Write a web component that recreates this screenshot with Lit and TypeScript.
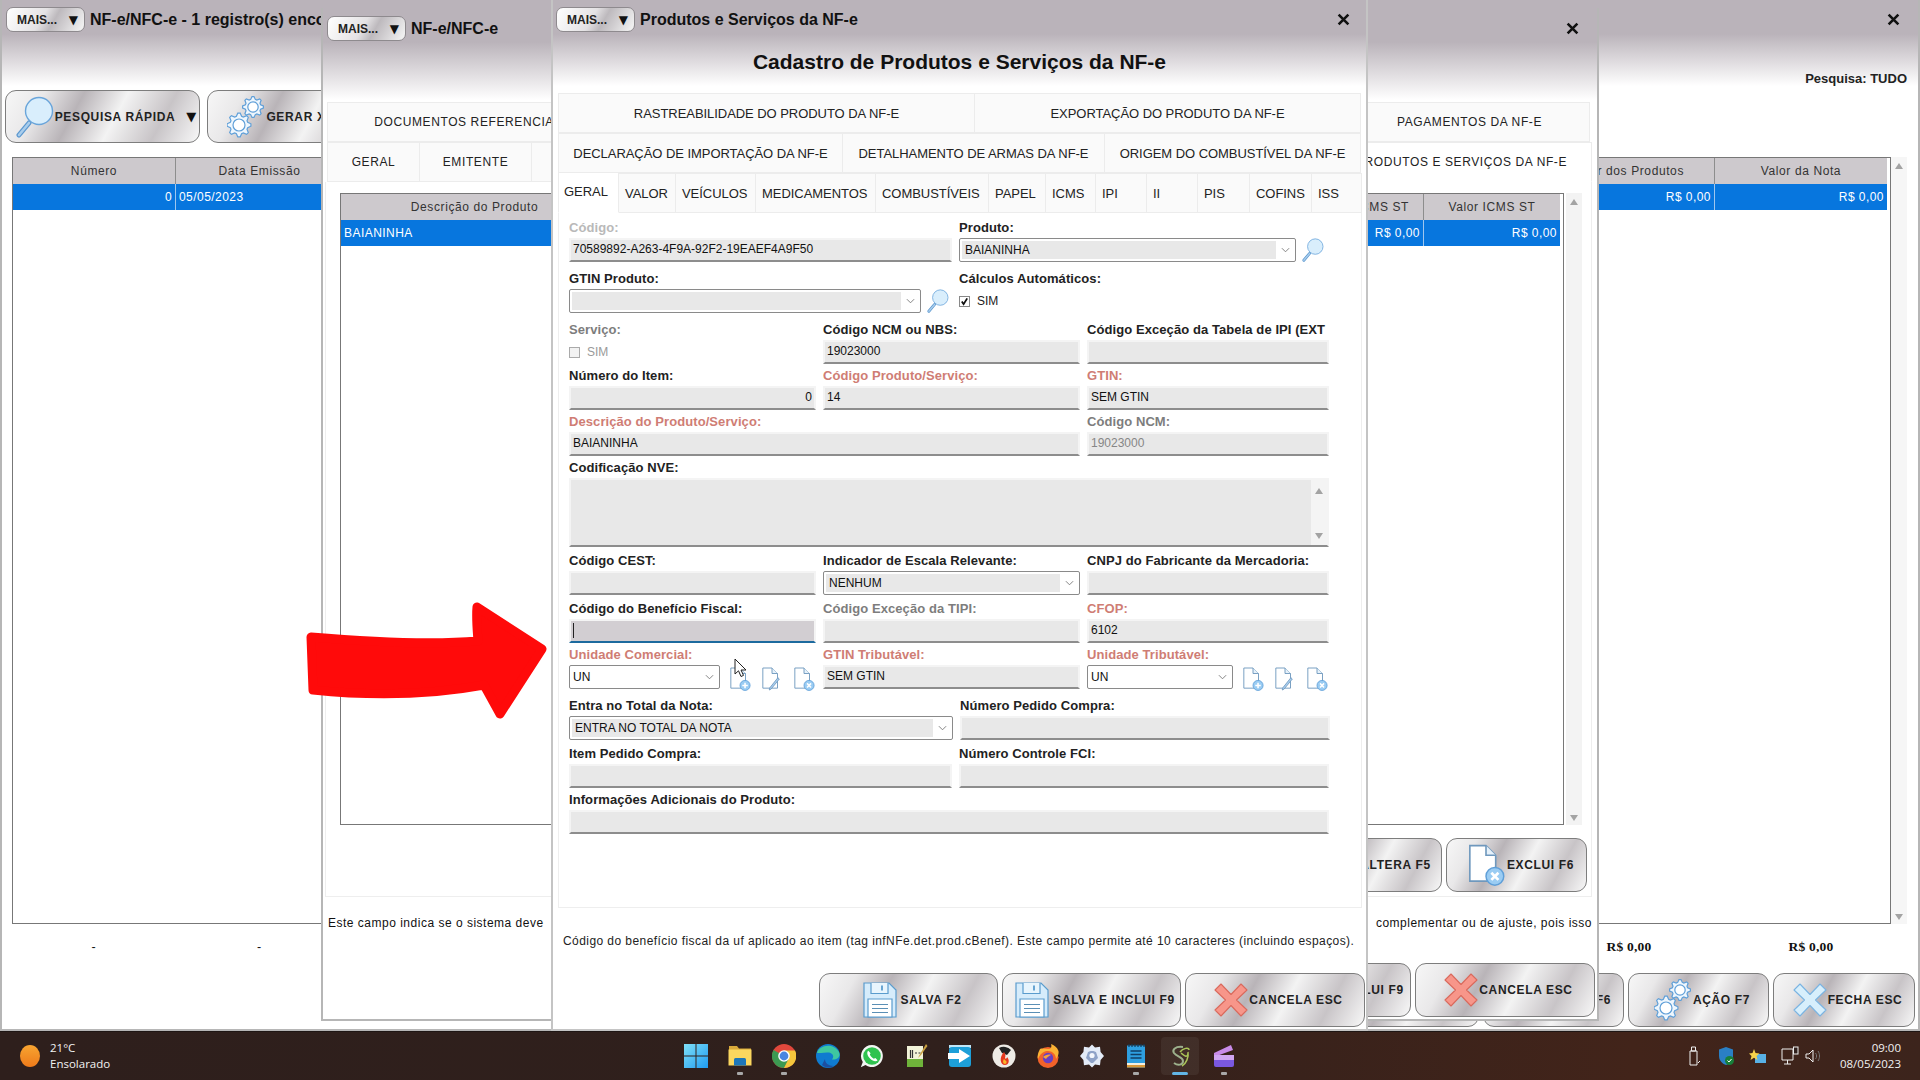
import { LitElement, html, css, svg } from "lit";
import { customElement } from "lit/decorators.js";

const gearPath = (cx: number, cy: number, r: number, teeth = 8) => {
  const pts: string[] = [];
  const steps = teeth * 4;
  for (let i = 0; i < steps; i++) {
    const a = (i / steps) * Math.PI * 2 - Math.PI / teeth / 4;
    const out = i % 4 < 2;
    const rr = out ? r : r * 0.76;
    pts.push(`${(cx + rr * Math.cos(a)).toFixed(1)} ${(cy + rr * Math.sin(a)).toFixed(1)}`);
  }
  return `M${pts.join("L")}Z`;
};

const gears = () => html`<svg class="ic-gears" viewBox="0 0 38 44">
  <path d=${gearPath(26, 12, 10.5)} fill="#eef6fd" stroke="#5f9fd8" stroke-width="1.2"/>
  <circle cx="26" cy="12" r="5.2" fill="#fff" stroke="#5f9fd8" stroke-width="1.2"/>
  <path d=${gearPath(12, 30, 12)} fill="#eef6fd" stroke="#5f9fd8" stroke-width="1.2"/>
  <circle cx="12" cy="30" r="6" fill="#fff" stroke="#5f9fd8" stroke-width="1.2"/>
</svg>`;

const lens = (cls: string) => html`<svg class=${cls} viewBox="0 0 38 42">
  <path d="M13 27 L3 39" stroke="#5b97cf" stroke-width="5" stroke-linecap="round"/>
  <path d="M13 27 L3 39" stroke="#a9cdec" stroke-width="2.6" stroke-linecap="round"/>
  <circle cx="23" cy="15" r="13.5" fill="#d9eefc" stroke="#6aa5da" stroke-width="1.4"/>
</svg>`;

const floppy = () => html`<svg class="ic-floppy" viewBox="0 0 34 36">
  <path d="M1 1H26L33 8V35H1Z" fill="#d6ecfb" stroke="#5a9ccd" stroke-width="1.2"/>
  <path d="M8 1V11.5H25V1" fill="#e8f5fd" stroke="#5a9ccd" stroke-width="1.2"/>
  <path d="M19 3.5V8.5" stroke="#5a9ccd" stroke-width="1.8"/>
  <path d="M5 17H29V35H5Z" fill="#fff" stroke="#5a9ccd" stroke-width="1.2"/>
  <path d="M9 22.5H25M9 26.5H25M9 30.5H25" stroke="#5a8fb5" stroke-width="1"/>
</svg>`;

const bigX = (fill: string, stroke: string) => html`<svg class="ic-x" viewBox="0 0 34 34">
  <path d="M7 1 L17 11.5 L27 1 L33 7 L22.5 17 L33 27 L27 33 L17 22.5 L7 33 L1 27 L11.5 17 L1 7Z" fill=${fill} stroke=${stroke} stroke-width="1.1" stroke-linejoin="round"/>
</svg>`;

const docBadge = (kind: "add" | "edit" | "del", cls = "ic-doc") => html`<svg class=${cls} viewBox="0 0 24 26">
  <path d="M2 1H12L18 7V23H2Z" fill="#fff" stroke="#6f98bd" stroke-width="1"/>
  <path d="M12 1V7H18" fill="#e6f1fa" stroke="#6f98bd" stroke-width="1"/>
  ${kind === "edit"
    ? svg`<path d="M20 13 L11 24 L9 25 L9.6 22.6 L18.4 11.6Z" fill="#a8cdee" stroke="#6f98bd" stroke-width=".9"/>`
    : svg`<circle cx="17.5" cy="20" r="5.5" fill="#9accf3" stroke="#5f9fd8" stroke-width=".9"/>
      ${kind === "add"
        ? svg`<path d="M17.5 17V23M14.5 20H20.5" stroke="#fff" stroke-width="1.7"/>`
        : svg`<path d="M15.3 17.8L19.7 22.2M19.7 17.8L15.3 22.2" stroke="#fff" stroke-width="1.7"/>`}`}
</svg>`;

const chevron = () => html`<svg class="chev" viewBox="0 0 10 6"><path d="M1 1 L5 5 L9 1" fill="none" stroke="#777" stroke-width="1"/></svg>`;

const closeX = () => html`<svg class="close" viewBox="0 0 12 12"><path d="M1.5 1.5 L10.5 10.5 M10.5 1.5 L1.5 10.5" stroke="#111" stroke-width="2.4"/></svg>`;

const mais = () => html`<div class="mais"><span>MAIS...</span><span class="tri">▼</span></div>`;

const btn = (label: string, icon: unknown, w: number) =>
  html`<div class="btn" style="width:${w}px">${icon}<span>${label}</span></div>`;

type Field = {
  l?: string; w: number; kind?: string; v?: string; tone?: string; white?: boolean;
  right?: boolean; off?: boolean; focus?: boolean;
};
type Row = { h: number; f: Field[] };

const rows: Row[] = [
  { h: 51, f: [
    { l: "Código:", w: 383, tone: "faint", v: "70589892-A263-4F9A-92F2-19EAEF4A9F50" },
    { l: "Produto:", w: 337, kind: "combo", v: "BAIANINHA" },
    { w: 24, kind: "lens" },
  ] },
  { h: 51, f: [
    { l: "GTIN Produto:", w: 352, kind: "combo", v: "" },
    { w: 24, kind: "lens" },
    { l: "Cálculos Automáticos:", w: 300, kind: "check", v: "SIM" },
  ] },
  { h: 46, f: [
    { l: "Serviço:", w: 247, kind: "check-off", v: "SIM", tone: "gray" },
    { l: "Código NCM ou NBS:", w: 257, v: "19023000" },
    { l: "Código Exceção da Tabela de IPI (EXT", w: 242, v: "" },
  ] },
  { h: 46, f: [
    { l: "Número do Item:", w: 247, v: "0", right: true },
    { l: "Código Produto/Serviço:", w: 257, v: "14", tone: "red" },
    { l: "GTIN:", w: 242, v: "SEM GTIN", tone: "red" },
  ] },
  { h: 46, f: [
    { l: "Descrição do Produto/Serviço:", w: 511, v: "BAIANINHA", tone: "red" },
    { l: "Código NCM:", w: 242, v: "19023000", tone: "gray", off: true },
  ] },
  { h: 93, f: [{ l: "Codificação NVE:", w: 760, kind: "area" }] },
  { h: 48, f: [
    { l: "Código CEST:", w: 247, v: "" },
    { l: "Indicador de Escala Relevante:", w: 257, kind: "combo", v: "NENHUM" },
    { l: "CNPJ do Fabricante da Mercadoria:", w: 242, v: "" },
  ] },
  { h: 46, f: [
    { l: "Código do Benefício Fiscal:", w: 247, v: "", focus: true },
    { l: "Código Exceção da TIPI:", w: 257, v: "", tone: "gray" },
    { l: "CFOP:", w: 242, v: "6102", tone: "red" },
  ] },
  { h: 51, f: [
    { l: "Unidade Comercial:", w: 151, kind: "combo", v: "UN", white: true, tone: "red" },
    { w: 89, kind: "docs" },
    { l: "GTIN Tributável:", w: 257, v: "SEM GTIN", tone: "red" },
    { l: "Unidade Tributável:", w: 146, kind: "combo", v: "UN", white: true, tone: "red" },
    { w: 89, kind: "docs" },
  ] },
  { h: 48, f: [
    { l: "Entra no Total da Nota:", w: 384, kind: "combo", v: "ENTRA NO TOTAL DA NOTA" },
    { l: "Número Pedido Compra:", w: 370, v: "" },
  ] },
  { h: 46, f: [
    { l: "Item Pedido Compra:", w: 383, v: "" },
    { l: "Número Controle FCI:", w: 370, v: "" },
  ] },
  { h: 45, f: [{ l: "Informações Adicionais do Produto:", w: 760, v: "" }] },
];

const control = (f: Field) => {
  switch (f.kind) {
    case "combo":
      return html`<div class="combo"><div class="combo-in ${f.white ? "white" : ""}">${f.v}</div>${chevron()}</div>`;
    case "lens":
      return html`<div class="tool">${lens("ic-lens-s")}</div>`;
    case "check":
      return html`<div class="check"><span class="box"><svg viewBox="0 0 10 10"><path d="M2 5 L4 8 L8 1.5" fill="none" stroke="#111" stroke-width="2"/></svg></span><span>${f.v}</span></div>`;
    case "check-off":
      return html`<div class="check off"><span class="box"></span><span>${f.v}</span></div>`;
    case "docs":
      return html`<div class="docs">${docBadge("add")}${docBadge("edit")}${docBadge("del")}</div>`;
    case "area":
      return html`<div class="area"><div class="area-fill"></div><div class="area-bar"><i class="up"></i><i class="down"></i></div></div>`;
    default:
      return html`<div class="input ${f.right ? "right" : ""} ${f.off ? "muted" : ""} ${f.focus ? "focus" : ""}">${f.focus ? html`<span class="caret"></span>` : f.v}</div>`;
  }
};

const taskIcons = [
  html`<svg viewBox="0 0 24 24"><defs><linearGradient id="wg" x1="0" y1="0" x2="1" y2="1"><stop offset="0" stop-color="#7fe0f8"/><stop offset="1" stop-color="#1f9bf0"/></linearGradient></defs><path d="M0 0H11.5V11.5H0ZM12.5 0H24V11.5H12.5ZM0 12.5H11.5V24H0ZM12.5 12.5H24V24H12.5Z" fill="url(#wg)"/></svg>`,
  html`<svg viewBox="0 0 24 24"><path d="M1 2H9L11 4.5H23V21H1Z" fill="#d9a93a"/><path d="M0.5 5.5H23.5V21.5H0.5Z" fill="#fbd75f"/><path d="M6 21.5V15.5Q6 14 7.5 14H16.5Q18 14 18 15.5V21.5Z" fill="#1d76b8"/></svg>`,
  html`<svg viewBox="0 0 24 24"><circle cx="12" cy="12" r="12" fill="#e0483c"/><path d="M12 12 L1.6 6 A12 12 0 0 0 12 24 L18 13.5Z" fill="#3c9a52"/><path d="M12 6.5 H23 A12 12 0 0 1 12 24 L17.5 13Z" fill="#f5c63c"/><circle cx="12" cy="12" r="5.8" fill="#fff"/><circle cx="12" cy="12" r="4.4" fill="#4a86e0"/></svg>`,
  html`<svg viewBox="0 0 24 24"><circle cx="12" cy="12" r="12" fill="#0f7bd0"/><path d="M1 9 C3 1 17 -2 23 8 C25 13 21 16 16 15.5 C19 12 16 8 11 8.5 C6 9 4 9 1 9Z" fill="#3ec7a0"/><path d="M9 15 C9 19 12 22 18 22 C14 24 9 24 6 21 C7 19 8 17 9 15Z" fill="#1d4fa0"/></svg>`,
  html`<svg viewBox="0 0 24 24"><path d="M12 1 A11 11 0 1 1 5.5 21 L0.8 23.2 L2.8 18 A11 11 0 0 1 12 1Z" fill="#f2f6f2"/><circle cx="12" cy="12" r="8.8" fill="#2fc34f"/><path d="M8.3 6.8 C6.6 8 7 11.5 10 14.5 C13 17.5 16.2 18 17.6 16.2 L15.4 14 L13.8 14.8 C12.5 14.3 10.4 12.2 9.8 10.6 L10.6 9.2Z" fill="#fff"/></svg>`,
  html`<svg viewBox="0 0 24 24"><path d="M3 2H19V23H3Z" fill="#f2f3d8"/><path d="M3 15 H19 V23 H3Z" fill="#6fb33a"/><path d="M6.5 6V14M8.5 6V14M11 9H13M14.5 9H16.5" stroke="#333" stroke-width="1.2"/><path d="M22 0 L15 12 L14 14 L17 11 L23.5 2Z" fill="#c9a040"/></svg>`,
  html`<svg viewBox="0 0 24 24"><path d="M1 1H23V4L12 7L1 4Z" fill="#bfe6f7"/><rect x="1" y="3" width="22" height="20" rx="3" fill="#1d9fd8"/><path d="M0 9H11V5L22 12L11 19V15H0Z" fill="#fff"/></svg>`,
  html`<svg viewBox="0 0 24 24"><circle cx="12" cy="12" r="11.5" fill="#eeebe6"/><path d="M7 4 A10 10 0 0 1 19 6 L15 11 L10 9Z" fill="#222"/><path d="M12 8 C7 13 8 21 13 21 C17 21 18 16 15 13 C15 15 13 15 13 14 C14 11 13 9 12 8Z" fill="#e5391f"/><path d="M12 15 C10.5 17 11 20 13 20 C15 20 15 17 13.5 16.5Z" fill="#f8b62a"/></svg>`,
  html`<svg viewBox="0 0 24 24"><circle cx="12" cy="13.5" r="10.5" fill="#f2622a"/><path d="M4 5 C2 9 1 12 2 15 C5 8 9 7 12 7 C16 7 20 10 20 15 C22 12 23 10 22.5 7 C21 3 18 1 15 0 C16 3 15 5 12 5 C9 5 6 4 4 5Z" fill="#fbb234"/><circle cx="12" cy="14" r="5.2" fill="#6a3fc0"/><path d="M7 13 C9 11 13 10 15 11 C13 12 11 13 10 15Z" fill="#f7a33a"/></svg>`,
  html`<svg viewBox="0 0 24 24"><path d="M12 0.5 L15 3.5 L20 2.8 L20.6 8 L24 12 L20.6 16 L20 21.2 L15 20.5 L12 23.5 L9 20.5 L4 21.2 L3.4 16 L0 12 L3.4 8 L4 2.8 L9 3.5Z" fill="#e3ebf7"/><path d="M8 8 C10 6.5 14 6.5 16 8 L18 14 L13 19 H11 L6 14Z" fill="#8fa3c8"/><circle cx="12" cy="11.5" r="2.6" fill="#f4f7fc"/></svg>`,
  html`<svg viewBox="0 0 24 24"><rect x="3" y="1.5" width="18" height="22" fill="#2e9fe0"/><rect x="3" y="19" width="18" height="2" fill="#f4f0e0"/><rect x="3" y="21" width="18" height="2.5" fill="#d99a3c"/><path d="M5 0V3M8 0V3M11 0V3M14 0V3M17 0V3M20 0V3" stroke="#123a58" stroke-width="1.2"/><path d="M6.5 7H17.5M6.5 10.5H17.5M6.5 14H17.5" stroke="#103f66" stroke-width="1.5"/></svg>`,
  html`<svg viewBox="0 0 24 24"><path d="M15 3 C7 2 4 6 6 9 C9 13 15 13 15 17 C15 21 10 22 6 19" fill="none" stroke="#97ad86" stroke-width="2"/><path d="M12 8 C15 4 21 3 21 6 M20 8 C21 13 18 20 14 22 M13 9 C17 12 19 14 20 10" fill="none" stroke="#a5c24f" stroke-width="1.5"/></svg>`,
  html`<svg viewBox="0 0 24 24"><path d="M2 9 L19 1 L21 6 L2 13Z" fill="#c98be8"/><path d="M2 11 H22 V21 Q22 23 20 23 H4 Q2 23 2 21Z" fill="#7a58e0"/><path d="M2 11 H22 V16 H2Z" fill="#d1a6f2"/></svg>`,
];

@customElement("app-root")
export class AppRoot extends LitElement {
  static styles = css`
    :host { display: block; width: 1920px; height: 1080px; overflow: hidden; font-family: "Liberation Sans", Arial, sans-serif; color: #111; }
    * { box-sizing: border-box; }
    svg { display: block; flex: none; }
    .root { display: flex; flex-direction: column; width: 1920px; height: 1080px; }
    .desk { position: relative; height: 1031px; background: #fff; overflow: hidden; }

    .win { position: absolute; display: flex; flex-direction: column; border: 2px solid #b6b6b6; border-top: 0; background: #fff; }
    .w1 { left: 0; top: 0; width: 1920px; height: 1031px; background: linear-gradient(#bab3ba 0, #bab3ba 34px, #fff 86px); }
    .w2 { left: 321px; top: 8px; width: 1278px; height: 1013px; background: linear-gradient(#bab3ba 0, #bab3ba 34px, #fff 92px); }
    .w3 { left: 551px; top: 0; width: 817px; height: 1031px; background: linear-gradient(#bab3ba 0, #bab3ba 34px, #fff 86px); border-color: #c4c4c4; }

    .title { display: flex; align-items: center; gap: 5px; height: 32px; padding-top: 7px; font-size: 16px; font-weight: 700; white-space: nowrap; overflow: hidden; flex: none; }
    .w1 .title { padding-left: 4px; padding-right: 18px; }
    .w2 .title { padding-left: 4px; padding-right: 18px; height: 33px; padding-top: 8px; }
    .w3 .title { padding-left: 3px; padding-right: 16px; }
    .title .close { margin-left: auto; width: 13px; height: 13px; }
    .title > span { overflow: hidden; text-overflow: clip; }
    .w1 .title > span { max-width: 231px; }
    .mais { display: flex; align-items: center; justify-content: space-between; width: 79px; height: 25px; padding: 0 6px 0 10px; border: 1px solid #8e8a8e; border-radius: 7px; background: linear-gradient(120deg, #fff 0%, #e4e2e4 45%, #bdb9bd 60%, #f6f6f6 100%); font-size: 12px; font-weight: 700; color: #222; flex: none; }
    .tri { font-family: "DejaVu Sans", sans-serif; font-size: 12px; color: #111; }

    .btn { display: flex; align-items: center; justify-content: center; gap: 1px; height: 54px; padding-left: 7px; border: 1px solid #7d7d7d; border-radius: 11px; background: linear-gradient(118deg, #f7f7f7 0%, #e9e8e9 18%, #b9b4b8 36%, #f3f3f3 56%, #c8c4c7 78%, #f8f8f8 100%); font-size: 12px; font-weight: 700; letter-spacing: .65px; color: #222; white-space: nowrap; flex: none; }
    .btnrow { display: flex; justify-content: flex-end; gap: 4px; flex: none; }
    .ic-x { width: 34px; height: 34px; }
    .ic-floppy { width: 34px; height: 36px; margin-right: 3px; }
    .ic-gears { width: 38px; height: 44px; }
    .ic-lens { width: 38px; height: 42px; }
    .ic-lens-s { width: 22px; height: 24px; }
    .ic-doc { width: 22px; height: 24px; }
    .ic-doc-l { width: 40px; height: 42px; }
    .btn .tri.big { margin-left: 10px; font-size: 13px; letter-spacing: 0; }

    /* back window */
    .w1-search { height: 58px; padding: 38px 11px 0 0; text-align: right; font-size: 13px; font-weight: 700; letter-spacing: 0; line-height: 18px; flex: none; color: #222; }
    .w1-tools { display: flex; gap: 7px; padding-left: 3px; height: 53px; flex: none; }
    .w1-tools .btn { height: 53px; }
    .tgrid-wrap { display: flex; flex: none; }
    .w1 .tgrid-wrap { margin: 14px 0 0 10px; height: 767px; }
    .w2 .tgrid-wrap { margin: 11px 0 0 14px; height: 632px; }
    .tgrid { flex: none; border: 1px solid #777; background: #fff; font-size: 12px; letter-spacing: .45px; padding-right: 3px; }
    .w1 .tgrid { width: 1879px; }
    .w2 .tgrid { width: 1224px; }
    .thead, .trow { display: grid; }
    .w1 .thead, .w1 .trow { grid-template-columns: 163px 168px 1fr 173px 172px; }
    .w2 .thead, .w2 .trow { grid-template-columns: 268px 1fr 116px 136px; }
    .thead { height: 26px; background: #cdc9cd; color: #333; letter-spacing: .6px; }
    .thead div { display: flex; align-items: center; justify-content: center; border-right: 1px solid #8d8d8d; white-space: nowrap; overflow: hidden; }
    .thead div:last-child { border-right: 0; }
    .trow { height: 26px; background: #0776de; color: #fff; }
    .trow div { display: flex; align-items: center; padding: 0 3px; border-right: 1px solid #9fc6ee; white-space: nowrap; overflow: hidden; }
    .trow div:last-child { border-right: 0; }
    .trow .r { justify-content: flex-end; }
    .sbar { width: 16px; background: #f3f3f3; display: flex; flex-direction: column; justify-content: space-between; padding: 6px 0 4px; align-items: center; flex: none; }
    .w1 .sbar { background: #f6f6f6; }
    .w2 .sbar { margin-left: 2px; }
    .up, .down { display: block; width: 0; height: 0; border-left: 4.5px solid transparent; border-right: 4.5px solid transparent; }
    .up { border-bottom: 6px solid #a3a3a3; }
    .down { border-top: 6px solid #a3a3a3; }
    .totals { display: grid; grid-template-columns: 163px 168px 1fr 172px 192px; padding-left: 10px; margin-right: 11px; height: 46px; padding-top: 15px; text-align: center; font-size: 12.5px; line-height: 16px; flex: none; }
    .totals b { font-family: "Liberation Serif", serif; font-size: 13.5px; letter-spacing: .2px; }
    .w1 .btnrow { margin-top: auto; padding: 0 3px 2px 0; }

    /* middle window */
    .w2-head { height: 61px; flex: none; }
    .w2-tabs { margin: 0 7px 0 4px; flex: none; }
    .ttr { display: flex; height: 40px; }
    .tab { display: flex; align-items: center; justify-content: center; background: #fafafa; border: 1px solid #ececec; border-left: 0; white-space: nowrap; overflow: hidden; flex: none; }
    .ttr .tab:first-child { border-left: 1px solid #ececec; }
    .w2-tabs .tab { font-size: 12px; letter-spacing: .6px; color: #222; }
    .tab.on { background: #fff; border-bottom-color: #fff; }
    .w2-panel { margin: 0 5px 0 2px; height: 715px; border: 1px solid #eee; border-top: 0; flex: none; }
    .w2-btns { padding: 13px 4px 0 0; }
    .w2 .hint { display: flex; justify-content: space-between; height: 66px; padding: 18px 5px 0 5px; font-size: 12px; letter-spacing: .5px; line-height: 16px; white-space: nowrap; flex: none; }
    .w2 .bot { padding-right: 2px; }

    /* front window */
    .heading { height: 61px; padding-bottom: 1px; line-height: 60px; text-align: center; font-size: 21px; font-weight: 700; flex: none; }
    .w3-tabs { margin: 0 5px; flex: none; }
    .w3-tabs .tab { font-size: 13px; color: #222; letter-spacing: -.05px; }
    .tab.l { justify-content: flex-start; padding-left: 6px; }
    .tab.on.l { padding-left: 5px; padding-bottom: 2px; border-top: 0; }
    .panel { margin: 0 4px 0 5px; height: 695px; border: 1px solid #eee; border-top: 0; padding: 7px 0 0 10px; flex: none; overflow: hidden; }
    .frow { display: flex; gap: 7px; align-items: flex-start; }
    .field { display: flex; flex-direction: column; flex: none; min-width: 0; }
    .lbl { height: 15px; margin-bottom: 3px; line-height: 15px; font-size: 13px; font-weight: 700; letter-spacing: .08px; color: #222; white-space: nowrap; overflow: hidden; }
    .lbl.red { color: #cf7d74; }
    .lbl.gray { color: #7d7d7d; }
    .lbl.faint { color: #b9b9b9; }
    .input { height: 24px; padding: 0 2px; line-height: 19px; font-size: 12px; color: #111; background: #e8e8e8; border: 2px solid #f4f4f4; border-bottom-color: #8d8d8d; white-space: nowrap; overflow: hidden; }
    .input.right { text-align: right; }
    .input.muted { color: #868686; }
    .input.focus { background: #d2ced2; border-bottom-color: #1c6a9e; }
    .caret { display: block; width: 1px; height: 15px; margin-top: 2px; background: #222; }
    .combo { position: relative; display: flex; align-items: center; height: 24px; padding: 2px 0 2px 2px; background: #fff; border: 1px solid #8a8a8a; border-radius: 2px; font-size: 12px; }
    .combo-in { flex: 1; height: 18px; min-width: 0; padding: 0 3px; line-height: 18px; background: #e8e8e8; white-space: nowrap; overflow: hidden; }
    .combo-in.white { background: #fff; padding-left: 1px; }
    .chev { width: 9px; height: 6px; margin: 0 5px 0 5px; }
    .tool { height: 24px; margin-left: -1px; display: flex; align-items: center; }
    .check { display: flex; align-items: center; gap: 7px; height: 24px; font-size: 12px; color: #222; }
    .check.off { color: #9a9a9a; }
    .box { display: block; width: 11px; height: 11px; padding: 0; border: 1px solid #888; background: #fff; }
    .box svg { width: 9px; height: 9px; }
    .check.off .box { border-color: #aaa; background: #f2f2f2; }
    .docs { display: flex; justify-content: flex-start; height: 26px; padding: 2px 0 0 2px; gap: 10px; }
    .area { display: flex; height: 69px; background: #f4f4f4; border: 2px solid #f4f4f4; border-bottom-color: #8d8d8d; }
    .area-fill { flex: 1; background: #e8e8e8; }
    .area-bar { width: 16px; display: flex; flex-direction: column; justify-content: space-between; align-items: center; padding: 8px 0 6px; flex: none; }
    .hint3 { height: 65px; padding: 25px 0 0 10px; font-size: 12px; letter-spacing: .43px; line-height: 16px; white-space: nowrap; color: #222; flex: none; }
    .w3 .btnrow { padding-right: 1px; }

    /* taskbar */
    .task { position: relative; display: flex; align-items: center; height: 49px; background: linear-gradient(90deg, #2e1f1c 0%, #30201c 50%, #42241a 85%, #3c241c 100%); color: #f2f2f2; font-family: "Open Sans", "Noto Sans", sans-serif; border-top: 1px solid #1f1614; }
    .weather { display: flex; align-items: center; gap: 10px; padding-left: 20px; width: 684px; flex: none; }
    .sun { width: 20px; height: 22px; border-radius: 50%; background: linear-gradient(#f8a531, #ee7a1a); flex: none; }
    .wx { font-size: 11.5px; line-height: 16px; }
    .apps { display: flex; align-items: center; gap: 20px; flex: none; }
    .app { position: relative; width: 24px; height: 38px; display: flex; align-items: center; justify-content: center; flex: none; }
    .app svg { width: 24px; height: 24px; }
    .app.run::after { content: ""; position: absolute; left: 9px; bottom: 0; width: 6px; height: 3px; background: #a8a8a8; border-radius: 1px; }
    .app.act::before { content: ""; position: absolute; left: -7px; top: 0; width: 38px; height: 38px; background: rgba(255,255,255,.06); border-radius: 4px; }
    .app.act::after { content: ""; position: absolute; left: 4px; bottom: 0; width: 16px; height: 3px; background: #62b6e6; border-radius: 2px; }
    .tray { display: flex; align-items: center; margin-left: auto; padding-right: 19px; gap: 14px; }
    .tray svg { width: 18px; height: 20px; }
    .tray .spk { margin-left: -9px; }
    .clock { margin-left: 4px; text-align: right; font-size: 11.5px; line-height: 16px; }

    .arrow { position: absolute; left: 300px; top: 595px; width: 255px; height: 130px; pointer-events: none; }
    .cursor { position: absolute; left: 734px; top: 658px; width: 14px; height: 20px; pointer-events: none; }
  `;

  render() {
    return html`<div class="root">
      <div class="desk">
        ${this.win1()}
        ${this.win2()}
        ${this.win3()}
        <svg class="arrow" viewBox="300 595 255 130"><path d="M311 637 C370 642 430 645 478 641 C477 628 476 618 477 607 L542 649 L500 714 L484 685 C430 695 370 696 313 690 Z" fill="#ff0a0a" stroke="#ff0a0a" stroke-width="9" stroke-linejoin="round"/></svg>
        <svg class="cursor" viewBox="0 0 14 20"><path d="M1 1 V16 L4.5 12.8 L7 18.5 L9.5 17.4 L7 12 H12Z" fill="#fff" stroke="#222" stroke-width="1"/></svg>
      </div>
      ${this.taskbar()}
    </div>`;
  }

  win1() {
    return html`<section class="win w1">
      <div class="title">${mais()}<span>NF-e/NFC-e - 1 registro(s) encontrado(s)</span>${closeX()}</div>
      <div class="w1-search">Pesquisa: TUDO</div>
      <div class="w1-tools">
        <div class="btn" style="width:195px">${lens("ic-lens")}<span>PESQUISA RÁPIDA</span><span class="tri big">▼</span></div>
        ${btn("GERAR XML NF-E", gears(), 185)}
      </div>
      <div class="tgrid-wrap">
        <div class="tgrid">
          <div class="thead"><div>Número</div><div>Data Emissão</div><div></div><div>Valor dos Produtos</div><div>Valor da Nota</div></div>
          <div class="trow"><div class="r">0</div><div>05/05/2023</div><div></div><div class="r">R$ 0,00</div><div class="r">R$ 0,00</div></div>
        </div>
        <div class="sbar"><i class="up"></i><i class="down"></i></div>
      </div>
      <div class="totals"><span>-</span><span>-</span><span></span><b>R$ 0,00</b><b>R$ 0,00</b></div>
      <div class="btnrow">
        ${btn("", docBadge("edit", "ic-doc-l"), 141)}
        ${btn("EXCLUI F6", docBadge("del", "ic-doc-l"), 141)}
        ${btn("AÇÃO F7", gears(), 141)}
        ${btn("FECHA ESC", bigX("#d7effc", "#7ab4e2"), 142)}
      </div>
    </section>`;
  }

  win2() {
    return html`<section class="win w2">
      <div class="title">${mais()}<span>NF-e/NFC-e</span>${closeX()}</div>
      <div class="w2-head"></div>
      <div class="w2-tabs">
        <div class="ttr">
          <div class="tab" style="width:302px">DOCUMENTOS REFERENCIADOS</div>
          <div class="tab" style="width:721px"></div>
          <div class="tab" style="width:240px">PAGAMENTOS DA NF-E</div>
        </div>
        <div class="ttr">
          <div class="tab" style="width:93px">GERAL</div>
          <div class="tab" style="width:112px">EMITENTE</div>
          <div class="tab" style="width:800px"></div>
          <div class="tab on" style="width:260px">PRODUTOS E SERVIÇOS DA NF-E</div>
        </div>
      </div>
      <div class="w2-panel">
        <div class="tgrid-wrap">
          <div class="tgrid">
            <div class="thead"><div>Descrição do Produto</div><div></div><div>Valor ICMS ST</div><div>Valor ICMS ST</div></div>
            <div class="trow"><div>BAIANINHA</div><div></div><div class="r">R$ 0,00</div><div class="r">R$ 0,00</div></div>
          </div>
          <div class="sbar"><i class="up"></i><i class="down"></i></div>
        </div>
        <div class="btnrow w2-btns">
          ${btn("ALTERA F5", docBadge("edit", "ic-doc-l"), 141)}
          ${btn("EXCLUI F6", docBadge("del", "ic-doc-l"), 141)}
        </div>
      </div>
      <div class="hint"><span>Este campo indica se o sistema deve</span><span>complementar ou de ajuste, pois isso</span></div>
      <div class="btnrow bot">
        ${btn("SALVA E INCLUI F9", floppy(), 181)}
        ${btn("CANCELA ESC", bigX("#f7968a", "#d9695c"), 180)}
      </div>
    </section>`;
  }

  win3() {
    const t3: [string, number][] = [["VALOR", 57], ["VEÍCULOS", 80], ["MEDICAMENTOS", 120], ["COMBUSTÍVEIS", 113], ["PAPEL", 57], ["ICMS", 50], ["IPI", 51], ["II", 51], ["PIS", 52], ["COFINS", 62], ["ISS", 50]];
    return html`<section class="win w3">
      <div class="title">${mais()}<span>Produtos e Serviços da NF-e</span>${closeX()}</div>
      <div class="heading">Cadastro de Produtos e Serviços da NF-e</div>
      <div class="w3-tabs">
        <div class="ttr">
          <div class="tab" style="width:417px">RASTREABILIDADE DO PRODUTO DA NF-E</div>
          <div class="tab" style="width:386px">EXPORTAÇÃO DO PRODUTO DA NF-E</div>
        </div>
        <div class="ttr">
          <div class="tab" style="width:285px">DECLARAÇÃO DE IMPORTAÇÃO DA NF-E</div>
          <div class="tab" style="width:262px">DETALHAMENTO DE ARMAS DA NF-E</div>
          <div class="tab" style="width:256px">ORIGEM DO COMBUSTÍVEL DA NF-E</div>
        </div>
        <div class="ttr">
          <div class="tab on l" style="width:61px">GERAL</div>
          ${t3.map(([n, w]) => html`<div class="tab l" style="width:${w}px">${n}</div>`)}
        </div>
      </div>
      <div class="panel">
        ${rows.map((r) => html`<div class="frow" style="height:${r.h}px">
          ${r.f.map((f) => html`<div class="field" style="width:${f.w}px">
            ${f.l ? html`<div class="lbl ${f.tone ?? ""}">${f.l}</div>` : html`<div class="lbl"></div>`}
            ${control(f)}
          </div>`)}
        </div>`)}
      </div>
      <div class="hint3">Código do benefício fiscal da uf aplicado ao item (tag infNFe.det.prod.cBenef). Este campo permite até 10 caracteres (incluindo espaços).</div>
      <div class="btnrow">
        ${btn("SALVA F2", floppy(), 179)}
        ${btn("SALVA E INCLUI F9", floppy(), 179)}
        ${btn("CANCELA ESC", bigX("#f7968a", "#d9695c"), 180)}
      </div>
    </section>`;
  }

  taskbar() {
    const running = new Set([1, 2, 10, 12]);
    return html`<footer class="task">
      <div class="weather"><span class="sun"></span><div class="wx">21°C<br />Ensolarado</div></div>
      <div class="apps">
        ${taskIcons.map((ic, i) => html`<div class="app ${running.has(i) ? "run" : ""} ${i === 11 ? "act" : ""}">${ic}</div>`)}
      </div>
      <div class="tray">
        <svg viewBox="0 0 18 20"><path d="M5 5H12V19H5ZM6.5 1H10.5V5H6.5Z" fill="none" stroke="#eee"/><path d="M13 17 L15 15" stroke="#eee"/></svg>
        <svg viewBox="0 0 18 20"><path d="M9 1 L16 3.5 V10 C16 15 12 18 9 19 C6 18 2 15 2 10 V3.5Z" fill="#2a7fc4"/><circle cx="12.5" cy="14.5" r="4.5" fill="#17803a"/><path d="M10.5 14.5 L12 16 L14.5 13" stroke="#fff" fill="none"/></svg>
        <svg viewBox="0 0 18 20"><path d="M6 8H17V17H6Z" fill="#58b1e6"/><path d="M5 3 L6.5 7 L10.5 7.5 L7.5 10 L8.5 14 L5 11.8 L1.5 14 L2.5 10 L0 7.5 L3.5 7Z" fill="#f5d24b"/></svg>
        <svg viewBox="0 0 18 20"><path d="M1 3H12V14H1ZM6.5 14V18M3 18H10" fill="none" stroke="#eee"/><rect x="12.5" y="1" width="4.5" height="7" fill="#30201c" stroke="#eee"/></svg>
        <svg class="spk" viewBox="0 0 18 20"><path d="M2 8H5L9 4V16L5 12H2Z" fill="none" stroke="#eee"/><path d="M11.5 7 C13 9 13 11 11.5 13M14 5 C16 8 16 12 14 15" fill="none" stroke="#777"/></svg>
        <div class="clock">09:00<br />08/05/2023</div>
      </div>
    </footer>`;
  }
}
